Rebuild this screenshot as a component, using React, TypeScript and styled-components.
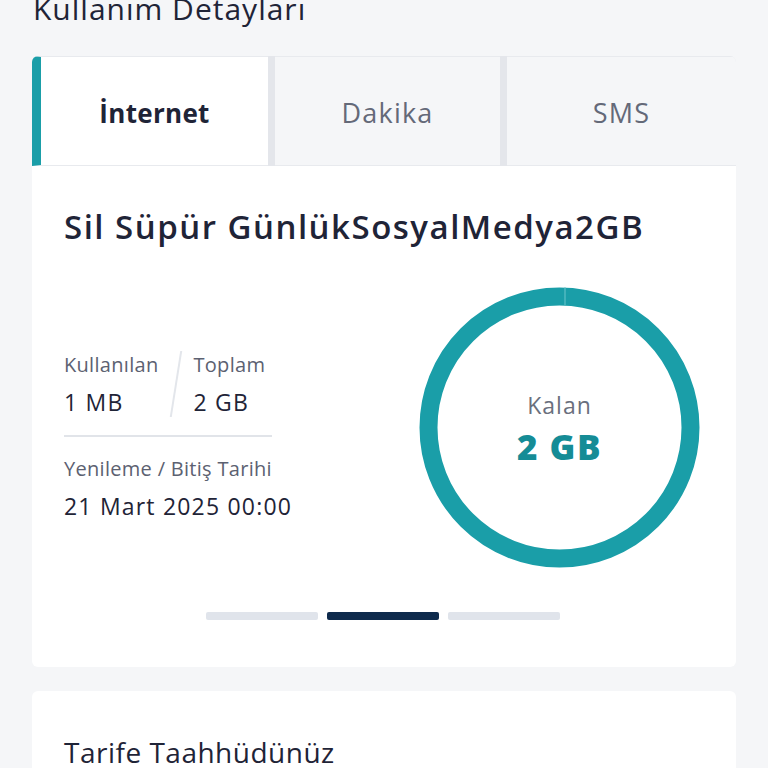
import React from 'react';
import styled, { createGlobalStyle } from 'styled-components';

const GlobalStyle = createGlobalStyle`
  body {
    margin: 0;
    background: #f5f6f8;
    font-family: 'Open Sans', 'Noto Sans', sans-serif;
    color: #1f2437;
  }
`;

const Page = styled.div`
  padding: 0 32px;
  height: 768px;
  overflow: hidden;
`;

const PageTitle = styled.h1`
  margin: -11px 0 0 1px;
  font-size: 30px;
  font-weight: 400;
  letter-spacing: 1px;
  line-height: 39px;
  color: #1f2437;
`;

const Card = styled.div`
  margin-top: 28px;
  background: #fff;
  border-radius: 6px;
  overflow: hidden;
`;

const Tabs = styled.div`
  display: grid;
  grid-template-columns: 236fr 225fr 229fr;
  gap: 7px;
  background: #e4e6eb;
  height: 110px;
`;

const Tab = styled.div<{ $active?: boolean }>`
  display: flex;
  align-items: center;
  justify-content: center;
  padding-top: 3px;
  background: ${(p) => (p.$active ? '#fff' : '#f5f6f8')};
  border-top: 1px solid #e8eaee;
  border-bottom: 1px solid #e8eaee;
  border-left: ${(p) => (p.$active ? '9px solid #1a9ea8' : 'none')};
  font-size: ${(p) => (p.$active ? '26px' : '27px')};
  letter-spacing: ${(p) => (p.$active ? '0.3px' : '1.2px')};
  font-weight: ${(p) => (p.$active ? 700 : 400)};
  color: ${(p) => (p.$active ? '#1f2437' : '#646978')};
`;

const Body = styled.div`
  padding: 40px 36px 47px 32px;
`;

const PackageName = styled.h2`
  margin: 0;
  font-size: 33px;
  font-weight: 600;
  letter-spacing: 1.5px;
  line-height: 42px;
  color: #1f2437;
`;

const StatsRow = styled.div`
  margin-top: 39px;
  display: flex;
  align-items: center;
  justify-content: space-between;
`;

const Info = styled.div`
  width: 208px;
  padding-top: 16px;
`;

const Pair = styled.div`
  display: flex;
  align-items: stretch;
  padding-bottom: 18px;
  border-bottom: 2px solid #e1e4e9;
`;

const Cell = styled.div`
  display: flex;
  flex-direction: column;
  gap: 8px;
`;

const Slash = styled.div`
  width: 2px;
  margin: 0 16px 0 17px;
  background: #e3e6eb;
  transform: skewX(-9deg);
`;

const Label = styled.div`
  font-size: 20px;
  letter-spacing: 0.3px;
  line-height: 28px;
  color: #5c6171;
  white-space: nowrap;
`;

const Value = styled.div`
  font-size: 23px;
  letter-spacing: 1.2px;
  line-height: 30px;
  color: #1f2437;
  white-space: nowrap;
`;

const DateBlock = styled.div`
  margin-top: 18px;
  display: flex;
  flex-direction: column;
  gap: 8px;
`;

const Ring = styled.div`
  position: relative;
  width: 281px;
  height: 281px;
  display: flex;
  flex-direction: column;
  align-items: center;
  justify-content: center;
  svg {
    position: absolute;
    inset: 0;
  }
`;

const RingLabel = styled.div`
  position: relative;
  font-size: 23px;
  letter-spacing: 1px;
  color: #6a6f7d;
  margin-top: 4px;
`;

const RingValue = styled.div`
  position: relative;
  font-size: 35px;
  letter-spacing: 1.5px;
  font-weight: 800;
  color: #158c96;
  margin-top: 2px;
`;

const Pager = styled.div`
  margin-top: 44px;
  display: flex;
  justify-content: center;
  gap: 9px;
  padding-left: 2px;
`;

const Dot = styled.div<{ $active?: boolean }>`
  width: 112px;
  height: 8px;
  border-radius: 2px;
  background: ${(p) => (p.$active ? '#0e2a4c' : '#e0e4eb')};
`;

const SecondCard = styled.div`
  margin-top: 24px;
  background: #fff;
  border-radius: 6px;
  padding: 42px 32px 40px;
`;

const SectionTitle = styled.h3`
  margin: 0;
  font-size: 28px;
  letter-spacing: 0.5px;
  font-weight: 400;
  color: #1f2437;
`;

export default function App() {
  return (
    <Page>
      <GlobalStyle />
      <PageTitle>Kullanım Detayları</PageTitle>
      <Card>
        <Tabs>
          <Tab $active>İnternet</Tab>
          <Tab>Dakika</Tab>
          <Tab>SMS</Tab>
        </Tabs>
        <Body>
          <PackageName>Sil Süpür GünlükSosyalMedya2GB</PackageName>
          <StatsRow>
            <Info>
              <Pair>
                <Cell>
                  <Label>Kullanılan</Label>
                  <Value>1 MB</Value>
                </Cell>
                <Slash />
                <Cell>
                  <Label>Toplam</Label>
                  <Value>2 GB</Value>
                </Cell>
              </Pair>
              <DateBlock>
                <Label>Yenileme / Bitiş Tarihi</Label>
                <Value>21 Mart 2025 00:00</Value>
              </DateBlock>
            </Info>
            <Ring>
              <svg width="281" height="281" viewBox="0 0 281 281">
                <circle cx="140.5" cy="140.5" r="131" fill="none" stroke="#1a9ea8" strokeWidth="18" />
                <line x1="146" y1="0" x2="146" y2="18" stroke="#6cc6cc" strokeWidth="1" />
              </svg>
              <RingLabel>Kalan</RingLabel>
              <RingValue>2 GB</RingValue>
            </Ring>
          </StatsRow>
          <Pager>
            <Dot />
            <Dot $active />
            <Dot />
          </Pager>
        </Body>
      </Card>
      <SecondCard>
        <SectionTitle>Tarife Taahhüdünüz</SectionTitle>
      </SecondCard>
    </Page>
  );
}
